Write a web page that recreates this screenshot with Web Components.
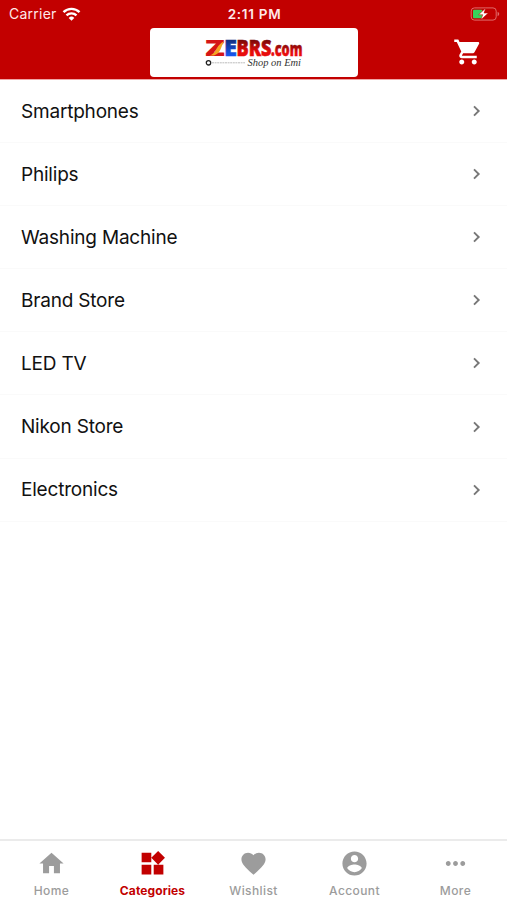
<!DOCTYPE html>
<html lang="en">
<head>
<meta charset="utf-8">
<title>Categories</title>
<style>
  body {
    margin: 0;
    background-color: white;
    font-family: Inter, "Liberation Sans", sans-serif;
  }
</style>
</head>
<body>
<shop-app></shop-app>

<script>
class StatusBar extends HTMLElement {
  constructor () {
    super()
    this.attachShadow({ mode: 'open' })
  }

  connectedCallback () {
    this.render()
  }

  render () {
    this.shadowRoot.innerHTML = /* html */`
      <style>
        :host{
          display: grid;
          grid-template-columns: 1fr auto 1fr;
          align-items: center;
          height: 27px;
          padding: 0 7px 0 9px;
          color: #ffe9e9;
          font-size: 13.5px;
        }
        .carrier{
          display: flex;
          align-items: center;
          gap: 5px;
          font-size: 14px;
          letter-spacing: 0.25px;
        }
        .time{
          font-weight: 600;
          letter-spacing: 0.7px;
        }
        .battery{
          justify-self: end;
        }
        svg{
          display: block;
        }
      </style>
      <div class="carrier">
        <span>Carrier</span>
        <svg width="19" height="14" viewBox="0 0 18 14" fill="none" stroke="#fff" stroke-width="2.4">
          <path d="M1 5.2a11.4 11.4 0 0 1 16 0"/>
          <path d="M4 8.4a7.2 7.2 0 0 1 10 0"/>
          <path d="M9 13.8L6.2 10.9a4 4 0 0 1 5.6 0z" fill="#fff" stroke="none"/>
        </svg>
      </div>
      <span class="time">2:11 PM</span>
      <svg class="battery" width="30" height="14" viewBox="0 0 30 14">
        <rect x="1.2" y=".9" width="25" height="12.2" rx="3.2" fill="none" stroke="#e06a6a"/>
        <path d="M27.6 4.8v4.4c2.2-.8 2.2-3.6 0-4.4z" fill="#e06a6a"/>
        <rect x="3" y="2.700" width="9.300" height="8.600" rx="1" fill="#37d35b"/>
        <path d="M15.600 1.200L8.600 7.700h4.100L11 12.800l7.200-6.700H14z" fill="#fff" stroke="#c20000" stroke-width=".5"/>
      </svg>
    `
  }
}

customElements.define('status-bar', StatusBar)

class BrandLogo extends HTMLElement {
  constructor () {
    super()
    this.attachShadow({ mode: 'open' })
  }

  connectedCallback () {
    this.render()
  }

  render () {
    this.shadowRoot.innerHTML = /* html */`
      <style>
        :host{
          display: flex;
          justify-content: center;
          width: 208px;
          height: 49px;
          background-color: white;
          border-radius: 4px;
        }
        svg{
          display: block;
          overflow: visible;
        }
        text{
          font-family: "Open Sans", "Liberation Sans", sans-serif;
          font-weight: 800;
        }
        .tagline{
          font-family: "Liberation Serif", serif;
          font-style: italic;
          font-weight: 400;
        }
      </style>
      <svg width="98" height="49" viewBox="0 0 98 49">
        <defs>
          <linearGradient id="red" x1="0" y1="0" x2="0" y2="1">
            <stop offset=".3" stop-color="#7d0909"/>
            <stop offset=".65" stop-color="#e80c0c"/>
          </linearGradient>
          <linearGradient id="blue" x1="0" y1="0" x2="0" y2="1">
            <stop offset=".3" stop-color="#123083"/>
            <stop offset=".75" stop-color="#1556ee"/>
          </linearGradient>
        </defs>
        <text x="0" y="28" font-size="23" textLength="20" lengthAdjust="spacingAndGlyphs" fill="#d51616">Z</text>
        <path d="M4 27.500c8-1.500 6-10 15.500-14.500-4 5-3 12-10.500 14.500z" fill="#f5a623"/>
        <text x="19" y="28" font-size="23" textLength="13" lengthAdjust="spacingAndGlyphs" fill="url(#blue)" stroke="url(#blue)" stroke-width=".5">E</text>
        <text x="31.500" y="28" font-size="23" textLength="35" lengthAdjust="spacingAndGlyphs" fill="url(#red)" stroke="url(#red)" stroke-width=".6">BRS</text>
        <text x="66" y="28" font-size="19" textLength="31.500" lengthAdjust="spacingAndGlyphs" fill="url(#red)" stroke="url(#red)" stroke-width=".5">.com</text>
        <circle cx="3.500" cy="34.800" r="2.200" fill="none" stroke="#222" stroke-width="1.300"/>
        <path d="M7 34.800h33" stroke="#bbb" stroke-width="1" stroke-dasharray="2 .6"/>
        <text class="tagline" x="42.500" y="37.500" font-size="9.500" textLength="53.500" lengthAdjust="spacingAndGlyphs" fill="#333">Shop on Emi</text>
      </svg>
    `
  }
}

customElements.define('brand-logo', BrandLogo)

class AppHeader extends HTMLElement {
  constructor () {
    super()
    this.attachShadow({ mode: 'open' })
  }

  connectedCallback () {
    this.render()
  }

  render () {
    this.shadowRoot.innerHTML = /* html */`
      <style>
        :host{
          display: block;
          height: 80px;
          background-color: #c20000;
          border-bottom: 1px solid #f0a5a5;
          box-sizing: border-box;
        }
        .bar{
          display: grid;
          grid-template-columns: 1fr auto 1fr;
          align-items: center;
          padding: 1px 25px 0;
        }
        .cart{
          grid-column: 3;
          justify-self: end;
          display: block;
          margin: 0 -1px 2px 0;
        }
        brand-logo{
          grid-column: 2;
        }
      </style>
      <status-bar></status-bar>
      <div class="bar">
        <brand-logo></brand-logo>
        <svg class="cart" width="30" height="30" viewBox="0 0 24 24" fill="#fff">
          <path d="M7 18c-1.100 0-1.990.9-1.990 2S5.900 22 7 22s2-.9 2-2-.9-2-2-2zM1 2v2h2l3.600 7.590-1.350 2.450c-.16.28-.25.61-.25.96 0 1.100.9 2 2 2h12v-2H7.420c-.14 0-.25-.11-.25-.25l.03-.12.9-1.630h7.450c.75 0 1.410-.41 1.750-1.030l3.580-6.490c.08-.14.12-.31.12-.48 0-.55-.45-1-1-1H5.210l-.94-2H1zm16 16c-1.100 0-1.990.9-1.990 2s.89 2 1.990 2 2-.9 2-2-.9-2-2-2z"/>
        </svg>
      </div>
    `
  }
}

customElements.define('app-header', AppHeader)

class CategoryRow extends HTMLElement {
  constructor () {
    super()
    this.attachShadow({ mode: 'open' })
  }

  connectedCallback () {
    this.render()
  }

  render () {
    this.shadowRoot.innerHTML = /* html */`
      <style>
        :host{
          display: flex;
          justify-content: space-between;
          align-items: center;
          height: 63.1px;
          padding: 0 25px 0 21px;
          box-sizing: border-box;
          border-bottom: 1px solid #fafafa;
          color: #111;
          font-size: 19px;
          letter-spacing: -0.2px;
        }
        svg{
          display: block;
        }
      </style>
      <slot></slot>
      <svg width="10" height="12" viewBox="0 0 10 12" fill="none" stroke="#777" stroke-width="1.900">
        <path d="M2 1.300L6.700 6 2 10.700"/>
      </svg>
    `
  }
}

customElements.define('category-row', CategoryRow)

const icons = {
  home: 'M10 20v-6h4v6h5v-8h3L12 3 2 12h3v8z',
  widgets: 'M13 13v8h8v-8h-8zM3 21h8v-8H3v8zM3 3v8h8V3H3zm13.660-1.310L11 7.340 16.660 13l5.660-5.660-5.660-5.650z',
  heart: 'M12 21.350l-1.450-1.320C5.400 15.360 2 12.280 2 8.500 2 5.420 4.420 3 7.500 3c1.740 0 3.410.81 4.500 2.090C13.090 3.810 14.760 3 16.500 3 19.580 3 22 5.420 22 8.500c0 3.780-3.400 6.860-8.550 11.540L12 21.350z',
  account: 'M12 2C6.480 2 2 6.480 2 12s4.480 10 10 10 10-4.480 10-10S17.520 2 12 2zm0 3c1.660 0 3 1.340 3 3s-1.340 3-3 3-3-1.340-3-3 1.340-3 3-3zm0 14.200c-2.500 0-4.710-1.280-6-3.220.03-1.990 4-3.080 6-3.080 1.990 0 5.970 1.090 6 3.080-1.290 1.940-3.500 3.220-6 3.220z',
  more: 'M6 10c-1.100 0-2 .9-2 2s.9 2 2 2 2-.9 2-2-.9-2-2-2zm12 0c-1.100 0-2 .9-2 2s.9 2 2 2 2-.9 2-2-.9-2-2-2zm-6 0c-1.100 0-2 .9-2 2s.9 2 2 2 2-.9 2-2-.9-2-2-2z'
}

class TabItem extends HTMLElement {
  constructor () {
    super()
    this.attachShadow({ mode: 'open' })
  }

  connectedCallback () {
    this.render()
  }

  render () {
    this.shadowRoot.innerHTML = /* html */`
      <style>
        :host{
          display: flex;
          flex-direction: column;
          align-items: center;
          padding-top: 8px;
          color: #9c9c9c;
          font-size: 12px;
          font-weight: 500;
          letter-spacing: 0.4px;
        }
        :host([active]){
          color: #c20000;
          font-weight: 700;
          letter-spacing: 0.1px;
        }
        svg{
          display: block;
          width: 29px;
          height: 29px;
          fill: currentColor;
        }
        span{
          line-height: 16px;
          margin-top: 5px;
        }
      </style>
      <svg viewBox="0 0 24 24"><path d="${icons[this.getAttribute('icon')]}"/></svg>
      <span><slot></slot></span>
    `
  }
}

customElements.define('tab-item', TabItem)

class ShopApp extends HTMLElement {
  constructor () {
    super()
    this.attachShadow({ mode: 'open' })
  }

  connectedCallback () {
    this.render()
  }

  render () {
    this.shadowRoot.innerHTML = /* html */`
      <style>
        :host{
          display: flex;
          flex-direction: column;
          height: 100vh;
          overflow: hidden;
        }
        main{
          flex: 1;
        }
        nav{
          display: grid;
          grid-template-columns: repeat(5, 101px);
          justify-content: center;
          height: 61px;
          box-sizing: border-box;
          border-top: 2px solid #ebebeb;
        }
      </style>
      <app-header></app-header>
      <main>
        <category-row>Smartphones</category-row>
        <category-row>Philips</category-row>
        <category-row>Washing Machine</category-row>
        <category-row>Brand Store</category-row>
        <category-row>LED TV</category-row>
        <category-row>Nikon Store</category-row>
        <category-row>Electronics</category-row>
      </main>
      <nav>
        <tab-item icon="home">Home</tab-item>
        <tab-item icon="widgets" active>Categories</tab-item>
        <tab-item icon="heart">Wishlist</tab-item>
        <tab-item icon="account">Account</tab-item>
        <tab-item icon="more">More</tab-item>
      </nav>
    `
  }
}

customElements.define('shop-app', ShopApp)
</script>
</body>
</html>
